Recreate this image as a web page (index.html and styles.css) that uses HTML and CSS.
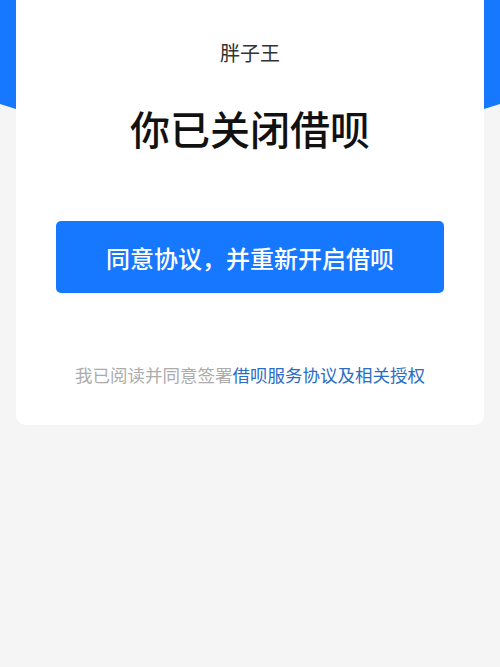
FILE: index.html
```html
<!DOCTYPE html>
<html lang="zh-CN">
  <head>
    <meta charset="UTF-8" />
    <meta name="viewport" content="width=device-width, initial-scale=1.0" />
    <title>借呗</title>
    <link rel="stylesheet" href="styles.css">
  </head>
  <body>
    <div class="top-bg"></div>
    <div class="card">
      <p class="name">胖子王</p>
      <h1 class="title">你已关闭借呗</h1>
      <button class="btn">同意协议，并重新开启借呗</button>
      <p class="agree">我已阅读并同意签署<a href="#">借呗服务协议及相关授权</a></p>
    </div>
  </body>
</html>
```

FILE: styles.css
```css
* {
  margin: 0;
  padding: 0;
  box-sizing: border-box;
}
body {
  position: relative;
  min-height: 667px;
  background-color: #f5f5f5;
  font-family: "Noto Sans CJK SC", "Noto Sans", sans-serif;
}
/* blue backdrop behind the card */
.top-bg {
  position: absolute;
  top: 0;
  left: 0;
  right: 0;
  height: 190px;
  background-color: #1677ff;
  clip-path: polygon(0 0, 100% 0, 100% 104px, 50% 182px, 0 104px);
}
.card {
  position: relative;
  display: flex;
  flex-direction: column;
  align-items: center;
  margin: 0 16px;
  padding: 39px 40px 38px;
  background-color: #fff;
  border-radius: 0 0 10px 10px;
}
.name {
  font-size: 20px;
  line-height: 28px;
  color: #333;
}
.title {
  margin-top: 33px;
  font-size: 40px;
  line-height: 56px;
  font-weight: 500;
  color: #111;
}
.btn {
  width: 100%;
  height: 72px;
  margin-top: 65px;
  border: none;
  border-radius: 5px;
  background-color: #1677ff;
  color: #fff;
  font-family: inherit;
  font-size: 24px;
  font-weight: 500;
}
.agree {
  margin-top: 70px;
  font-size: 17.5px;
  line-height: 24px;
  color: #acacac;
  white-space: nowrap;
}
.agree a {
  color: #2a6dc4;
  text-decoration: none;
}
```
